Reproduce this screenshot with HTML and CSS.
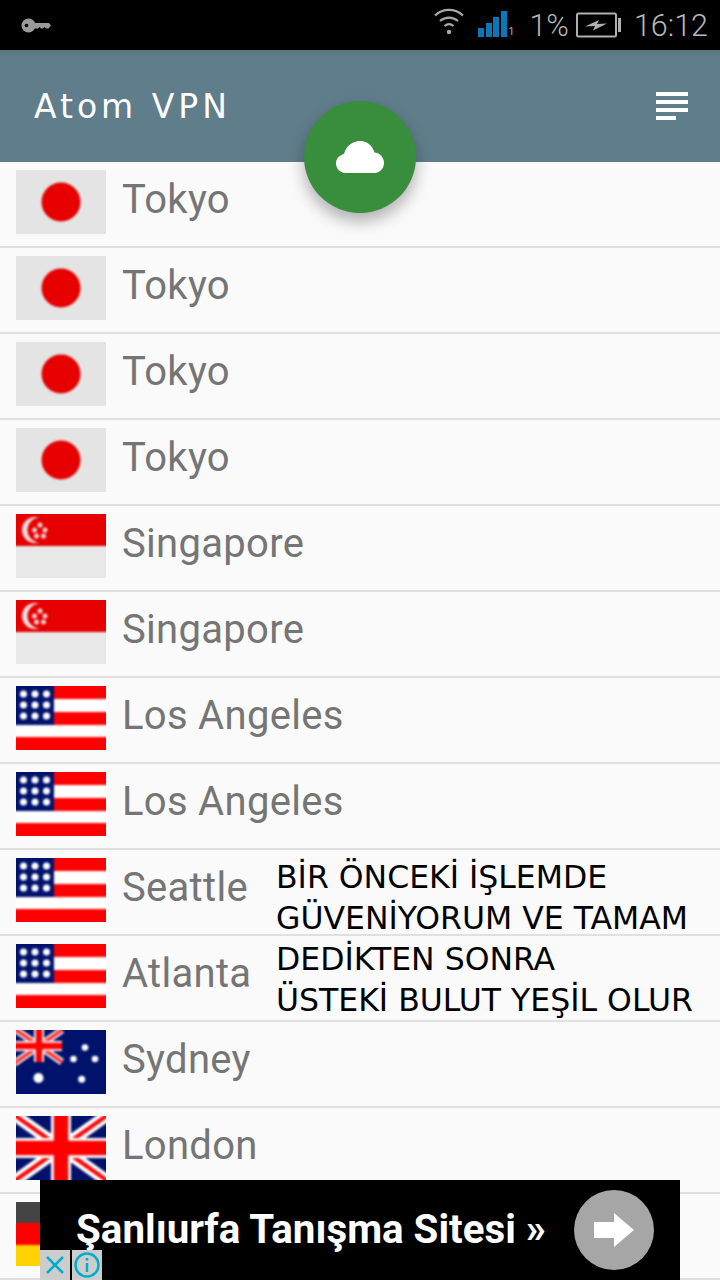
FILE: index.html
```html
<!DOCTYPE html>
<html lang="en">
<head>
    <meta charset="UTF-8" />
    <title>Atom VPN</title>
    <link rel="stylesheet" href="styles.css">
</head>
<body>
    <svg class="defs">
        <defs>
            <symbol id="flag-jp" viewBox="0 0 90 64">
                <rect x="-2" y="-2" width="94" height="68" fill="#e4e4e4" />
                <circle cx="45" cy="32" r="19.5" fill="#e60000" />
            </symbol>
            <symbol id="flag-sg" viewBox="0 0 90 64">
                <rect x="-2" y="-2" width="94" height="68" fill="#e8e8e8" />
                <rect x="-2" y="-2" width="94" height="34" fill="#e60000" />
                <circle cx="19" cy="16" r="13" fill="#f0dcdc" />
                <circle cx="24" cy="16" r="12.500" fill="#e60000" />
                <g fill="#f3d0d0">
                    <circle cx="24" cy="11" r="2.500" />
                    <circle cx="18.500" cy="16" r="2.500" />
                    <circle cx="29" cy="16" r="2.500" />
                    <circle cx="20.500" cy="22" r="2.500" />
                    <circle cx="27.500" cy="22" r="2.500" />
                </g>
            </symbol>
            <symbol id="flag-us" viewBox="0 0 90 64">
                <rect x="-2" y="-2" width="94" height="68" fill="#fff" />
                <rect x="-2" y="-2" width="94" height="15" fill="#f00" />
                <rect y="26" x="-2" width="94" height="13" fill="#f00" />
                <rect y="51" x="-2" width="94" height="15" fill="#f00" />
                <rect x="-2" y="-2" width="40" height="41" fill="#00126b" />
                <g fill="#fff">
                    <circle cx="7.500" cy="8" r="3.500" /><circle cx="19" cy="8" r="3.500" /><circle cx="30.500" cy="8" r="3.500" />
                    <circle cx="7.500" cy="19" r="3.500" /><circle cx="19" cy="19" r="3.500" /><circle cx="30.500" cy="19" r="3.500" />
                    <circle cx="7.500" cy="30" r="3.500" /><circle cx="19" cy="30" r="3.500" /><circle cx="30.500" cy="30" r="3.500" />
                </g>
            </symbol>
            <symbol id="flag-au" viewBox="0 0 90 64">
                <rect x="-2" y="-2" width="94" height="68" fill="#00126b" />
                <path d="M-2 -1.500L46 32M46 0L-2 33.500" stroke="#fff" stroke-width="7" />
                <path d="M-2 -1.500L46 32M46 0L-2 33.500" stroke="#f33" stroke-width="3.500" />
                <path d="M23 -2V32M-2 16H46" stroke="#fff" stroke-width="10" />
                <path d="M23 -2V32M-2 16H46" stroke="#f00" stroke-width="6.500" />
                <g fill="#fff">
                    <circle cx="22.500" cy="48" r="5" />
                    <circle cx="65.700" cy="49.300" r="3.500" />
                    <circle cx="69" cy="17.500" r="3.300" />
                    <circle cx="57.500" cy="29" r="3.300" />
                    <circle cx="79" cy="29" r="3.300" />
                </g>
            </symbol>
            <symbol id="flag-gb" viewBox="0 0 90 64">
                <rect x="-2" y="-2" width="94" height="68" fill="#00126b" />
                <path d="M-3 -2L93 66M93 -2L-3 66" stroke="#fff" stroke-width="12" />
                <path d="M-3 -2L93 66M93 -2L-3 66" stroke="#f00" stroke-width="4" />
                <path d="M45 -2V66M-2 32H92" stroke="#fff" stroke-width="20" />
                <path d="M45 -2V66M-2 32H92" stroke="#f00" stroke-width="14.500" />
            </symbol>
            <symbol id="flag-de" viewBox="0 0 90 64">
                <rect x="-2" y="-2" width="94" height="23" fill="#444" />
                <rect x="-2" y="21" width="94" height="22" fill="#f00" />
                <rect x="-2" y="43" width="94" height="23" fill="#ffd200" />
            </symbol>
        </defs>
    </svg>

    <div class="status-bar">
        <svg class="key-icon" width="30" height="15" viewBox="0 0 30 15">
            <circle cx="7.500" cy="7.500" r="7" fill="#9a9a9a" />
            <circle cx="5.500" cy="7.500" r="1.800" fill="#000" />
            <path d="M13 5H28L30 7.500L27.500 10.500H25L23.500 9L22 10.500H20L18.500 9L17 10.500H13Z" fill="#9a9a9a" />
        </svg>
        <div class="status-right">
            <svg class="wifi-icon" width="32" height="30" viewBox="0 0 32 30">
                <path d="M2 9.500C10 2 22 2 30 9.500" />
                <path d="M7 15C12.500 10.500 19.500 10.500 25 15" />
                <path d="M11.500 20C14.500 17.500 17.500 17.500 20.500 20" />
                <circle cx="16" cy="26" r="2.200" />
            </svg>
            <div class="signal">
                <span class="bar bar-1"></span>
                <span class="bar bar-2"></span>
                <span class="bar bar-3"></span>
                <span class="bar bar-4"></span>
                <span class="sim">1</span>
            </div>
            <span class="status-text pct">1%</span>
            <svg class="battery-icon" width="46" height="26" viewBox="0 0 46 26">
                <rect x="1" y="1.500" width="39" height="23" rx="1.500" />
                <path class="cap" d="M42 6H45V20H42Z" />
                <path class="bolt" d="M9 14.500L23 8L21 12L31 11.500L17 18.500L19 14Z" />
            </svg>
            <span class="status-text">16:12</span>
        </div>
    </div>

    <header class="app-bar">
        <h1 class="app-title">Atom VPN</h1>
        <div class="menu-icon">
            <span></span><span></span><span></span><span class="short"></span>
        </div>
    </header>

    <button class="fab">
        <svg width="48" height="32" viewBox="0 0 48 32">
            <path d="M10 32C4 32 0 27.500 0 22.500C0 17.500 3.500 14 8 13C10 5.500 16 0 24 0C31 0 36.500 4.500 38.500 11.500C44 12 48 16 48 22C48 27.500 44 32 38 32Z" fill="#fff" />
        </svg>
    </button>

    <ul class="server-list">
        <li class="server"><svg class="flag"><use href="#flag-jp" /></svg><span>Tokyo</span></li>
        <li class="server"><svg class="flag"><use href="#flag-jp" /></svg><span>Tokyo</span></li>
        <li class="server"><svg class="flag"><use href="#flag-jp" /></svg><span>Tokyo</span></li>
        <li class="server"><svg class="flag"><use href="#flag-jp" /></svg><span>Tokyo</span></li>
        <li class="server"><svg class="flag"><use href="#flag-sg" /></svg><span>Singapore</span></li>
        <li class="server"><svg class="flag"><use href="#flag-sg" /></svg><span>Singapore</span></li>
        <li class="server"><svg class="flag"><use href="#flag-us" /></svg><span>Los Angeles</span></li>
        <li class="server"><svg class="flag"><use href="#flag-us" /></svg><span>Los Angeles</span></li>
        <li class="server"><svg class="flag"><use href="#flag-us" /></svg><span>Seattle</span></li>
        <li class="server"><svg class="flag"><use href="#flag-us" /></svg><span>Atlanta</span></li>
        <li class="server"><svg class="flag"><use href="#flag-au" /></svg><span>Sydney</span></li>
        <li class="server"><svg class="flag"><use href="#flag-gb" /></svg><span>London</span></li>
        <li class="server"><svg class="flag"><use href="#flag-de" /></svg></li>
    </ul>

    <div class="note">
        BİR ÖNCEKİ İŞLEMDE<br>
        GÜVENİYORUM VE TAMAM<br>
        DEDİKTEN SONRA<br>
        ÜSTEKİ BULUT YEŞİL OLUR
    </div>

    <div class="ad">
        <span class="ad-text">Şanlıurfa Tanışma Sitesi »</span>
        <span class="ad-arrow">
            <svg width="40" height="34" viewBox="0 0 40 34">
                <path d="M0 9H20V0L40 17L20 34V25H0Z" fill="#fff" />
            </svg>
        </span>
        <div class="ad-choices">
            <span class="ad-btn">
                <svg width="22" height="22" viewBox="0 0 22 22">
                    <path d="M3 3L19 19M19 3L3 19" />
                </svg>
            </span>
            <span class="ad-btn">
                <svg width="26" height="26" viewBox="0 0 26 26">
                    <circle cx="13" cy="13" r="11.500" />
                    <path d="M13 11V20" />
                    <path d="M13 6V8.500" />
                </svg>
            </span>
        </div>
    </div>
</body>
</html>
```
FILE: styles.css
```css
* {
    box-sizing: border-box;
}

html, body {
    height: 1280px;
    overflow: hidden;
}

body {
    margin: 0;
    position: relative;
    font-family: Roboto, sans-serif;
    background-color: #fafafa;
}

.defs {
    display: none;
}

symbol {
    overflow: visible;
}

.status-bar {
    height: 50px;
    background-color: #000;
    display: flex;
    align-items: center;
    justify-content: space-between;
    padding: 0 12px 0 21px;
}

.key-icon {
    margin-top: 1px;
}

.status-right {
    display: flex;
    align-items: center;
}

.wifi-icon {
    margin-right: 13px;
    margin-top: -8px;
}

    .wifi-icon path {
        fill: none;
        stroke: #a8a8a8;
        stroke-width: 2.200;
    }

    .wifi-icon circle {
        fill: #a8a8a8;
    }

.signal {
    display: flex;
    align-items: flex-end;
    gap: 1.500px;
    height: 26px;
    margin-right: 15px;
    margin-top: -2px;
}

.bar {
    width: 6px;
    background-color: #0a78b8;
}

.bar-1 { height: 9px; }
.bar-2 { height: 14px; }
.bar-3 { height: 20px; }
.bar-4 { height: 26px; }

.sim {
    font-size: 11px;
    line-height: 10px;
    color: #a8a8a8;
}

.status-text {
    font-size: 30.500px;
    font-weight: 300;
    color: #b8b8b8;
}

.pct {
    margin-right: 7px;
}

.battery-icon {
    margin-right: 12px;
}

    .battery-icon rect {
        fill: none;
        stroke: #b0b0b0;
        stroke-width: 2;
    }

    .battery-icon .cap {
        fill: #b0b0b0;
    }

    .battery-icon .bolt {
        fill: #b0b0b0;
    }

.app-bar {
    height: 112px;
    background-color: #607d8b;
    background-image: linear-gradient(#587480, #607d8b 6px);
    display: flex;
    align-items: center;
    justify-content: space-between;
    padding: 0 32px 0 34px;
}

.app-title {
    margin: 0;
    font-family: "DejaVu Sans", sans-serif;
    font-size: 33px;
    font-weight: normal;
    letter-spacing: 4px;
    color: #fff;
}

.menu-icon {
    display: flex;
    flex-direction: column;
    gap: 4px;
    width: 32px;
}

    .menu-icon span {
        height: 4px;
        background-color: #fff;
    }

    .menu-icon .short {
        width: 20px;
    }

.fab {
    position: absolute;
    left: 304px;
    top: 101px;
    width: 112px;
    height: 112px;
    border: none;
    border-radius: 50%;
    background-color: #388e3c;
    box-shadow: 0 8px 16px rgba(0, 0, 0, 0.3);
    display: flex;
    align-items: center;
    justify-content: center;
    padding: 0;
}

.server-list {
    list-style: none;
    margin: 0;
    padding: 0;
}

.server {
    height: 86px;
    border-bottom: 2px solid #e0e0e0;
    display: flex;
    align-items: flex-start;
    padding: 8px 16px 0;
    font-size: 40px;
    letter-spacing: 0.300px;
    color: #757575;
}

    .server span {
        margin-left: 16px;
        line-height: 60px;
    }

.flag {
    width: 90px;
    height: 64px;
    flex-shrink: 0;
}

    .flag use {
        filter: blur(0.8px);
    }

.note {
    position: absolute;
    left: 276px;
    top: 857px;
    font-family: "DejaVu Sans", sans-serif;
    font-size: 31.500px;
    line-height: 41px;
    color: #000;
    white-space: nowrap;
}

.ad {
    position: absolute;
    left: 40px;
    top: 1180px;
    width: 640px;
    height: 100px;
    background-color: #000;
    display: flex;
    align-items: center;
    justify-content: space-between;
    padding: 0 26px 0 36px;
}

.ad-text {
    font-size: 40.300px;
    font-weight: bold;
    color: #fff;
    margin-top: -2px;
}

.ad-arrow {
    width: 80px;
    height: 80px;
    border-radius: 50%;
    background-color: #a6a6a6;
    display: flex;
    align-items: center;
    justify-content: center;
}

.ad-choices {
    position: absolute;
    left: 0;
    bottom: 0;
    display: flex;
    gap: 2px;
}

.ad-btn {
    width: 30px;
    height: 30px;
    background-color: #cdcdcd;
    display: flex;
    align-items: center;
    justify-content: center;
}

    .ad-btn svg {
        fill: none;
        stroke: #00aecb;
        stroke-width: 2.500;
    }
```
